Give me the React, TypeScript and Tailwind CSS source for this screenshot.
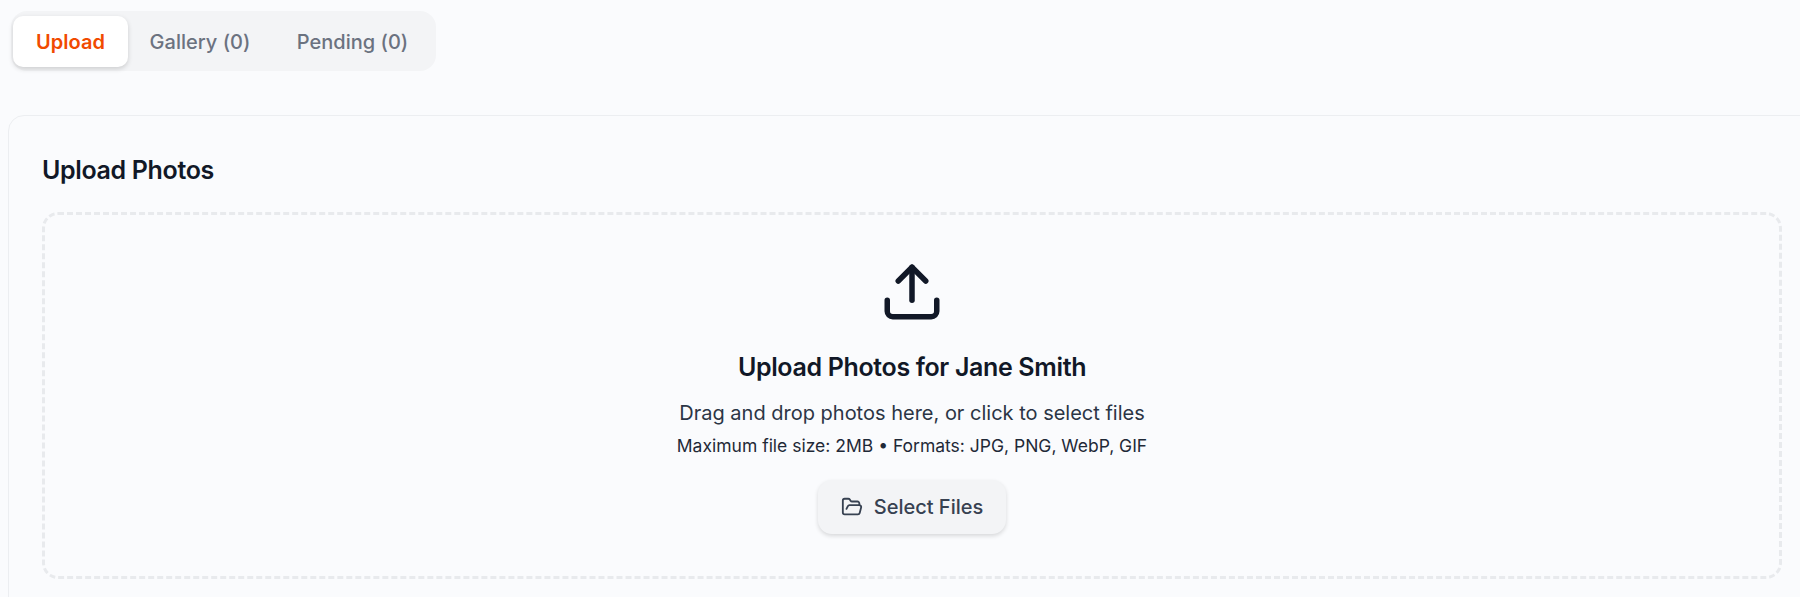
import { Upload, FolderOpen } from "lucide-react";

export default function App() {
  return (
    <div className="h-[597px] w-[1800px] overflow-hidden bg-[#fafbfd] font-['Inter',sans-serif]">
      <div className="pl-[11px] pt-[11px]">
        <div className="flex h-[60px] w-[425px] items-start gap-[2px] rounded-[16px] bg-[#f3f4f6] px-[2px] pt-[5px]">
          <div className="flex h-[51px] w-[115px] items-center justify-center rounded-[10px] bg-white text-[20px] font-semibold text-[#f14a00] shadow-[0_2px_5px_rgba(0,0,0,0.16)]">
            Upload
          </div>
          <div className="flex h-[51px] w-[140px] items-center justify-center text-[20px] font-medium tracking-[0.02px] text-[#6b7280]">
            Gallery (0)
          </div>
          <div className="flex h-[51px] w-[161px] items-center justify-center text-[20px] font-medium tracking-[0.02px] text-[#6b7280]">
            Pending (0)
          </div>
        </div>
      </div>
      <div className="ml-[8px] mt-[44px] w-[1808px] rounded-[16px] border border-[#eceef1] px-[33px] pb-[34px] pt-[36px]">
        <h2 className="text-[25px] font-semibold leading-[36px] tracking-[-0.35px] text-[#111827]">Upload Photos</h2>
        <div className="mt-[24px] flex h-[367px] w-[1740px] flex-col items-center rounded-[16px] border-[3px] border-dashed border-[#e8eaed] pt-[44px]">
          <Upload className="h-[66px] w-[66px] text-[#111827]" strokeWidth={2} />
          <h3 className="mt-[24px] text-[25px] font-semibold leading-[36px] tracking-[-0.35px] text-[#111827]">
            Upload Photos for Jane Smith
          </h3>
          <p className="mt-[14px] text-[20px] leading-[28px] text-[#2b3545]">
            Drag and drop photos here, or click to select files
          </p>
          <p className="mt-[7px] text-[17.5px] leading-[24px] text-[#1f2937]">
            Maximum file size: 2MB • Formats: JPG, PNG, WebP, GIF
          </p>
          <div className="mt-[22px] flex h-[54px] w-[188px] items-center justify-center gap-[11px] rounded-[14px] bg-[#f3f4f6] text-[20px] font-medium text-[#374151] shadow-[0_2px_4px_rgba(0,0,0,0.14)]">
            <FolderOpen className="h-[22px] w-[22px]" strokeWidth={2} />
            Select Files
          </div>
        </div>
      </div>
    </div>
  );
}
